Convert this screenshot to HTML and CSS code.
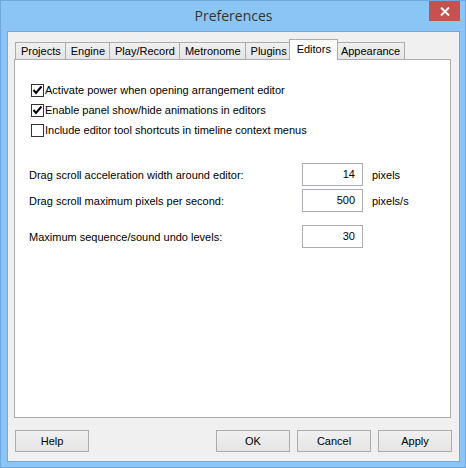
FILE: index.html
```html
<!DOCTYPE html>
<html lang="en">
<head>
  <meta charset="UTF-8" />
  <title>Preferences</title>
  <link rel="stylesheet" href="styles.css">
</head>
<body>

  <div class="window">
    <div class="titlebar">
      <span></span>
      <h1 class="title">Preferences</h1>
      <button class="close" aria-label="Close">
        <svg width="10" height="9" viewBox="0 0 10 9">
          <path d="M1 0.5 L9 8.5 M9 0.5 L1 8.5" stroke="#fff" stroke-width="1.9" />
        </svg>
      </button>
    </div>

    <div class="client">
      <ul class="tabs">
        <li class="tab">Projects</li>
        <li class="tab">Engine</li>
        <li class="tab">Play/Record</li>
        <li class="tab">Metronome</li>
        <li class="tab">Plugins</li>
        <li class="tab active">Editors</li>
        <li class="tab">Appearance</li>
      </ul>

      <div class="panel">
        <div class="checks">
          <label class="check">
            <span class="box"><svg width="11" height="11" viewBox="0 0 11 11"><path d="M1.5 5 L4 8 L9.5 1.5" fill="none" stroke="#000" stroke-width="2" /></svg></span>
            Activate power when opening arrangement editor
          </label>
          <label class="check">
            <span class="box"><svg width="11" height="11" viewBox="0 0 11 11"><path d="M1.5 5 L4 8 L9.5 1.5" fill="none" stroke="#000" stroke-width="2" /></svg></span>
            Enable panel show/hide animations in editors
          </label>
          <label class="check">
            <span class="box"></span>
            Include editor tool shortcuts in timeline context menus
          </label>
        </div>

        <div class="fields">
          <div class="row">
            <span class="label">Drag scroll acceleration width around editor:</span>
            <span class="field">14</span>
            <span class="unit">pixels</span>
          </div>
          <div class="row">
            <span class="label">Drag scroll maximum pixels per second:</span>
            <span class="field">500</span>
            <span class="unit">pixels/s</span>
          </div>
          <div class="row sep">
            <span class="label">Maximum sequence/sound undo levels:</span>
            <span class="field">30</span>
          </div>
        </div>
      </div>

      <div class="buttons">
        <button class="btn help">Help</button>
        <button class="btn">OK</button>
        <button class="btn">Cancel</button>
        <button class="btn">Apply</button>
      </div>
    </div>
  </div>

</body>
</html>
```

FILE: styles.css
```css
body {
  margin: 0;
  padding: 0;
  font-family: 'Liberation Sans', Arial, sans-serif;
  font-size: 11px;
  color: #000;
}

.window {
  width: 466px;
  height: 468px;
  box-sizing: border-box;
  border: 1px solid #6ea8dd;
  background: #8bc5f6;
  padding: 0 5px 5px 6px;
  display: flex;
  flex-direction: column;
}

.titlebar {
  height: 30px;
  display: grid;
  grid-template-columns: 1fr auto 1fr;
  align-items: start;
}

.title {
  margin: 0;
  font-family: 'Open Sans', 'Noto Sans', sans-serif;
  font-weight: normal;
  font-size: 14px;
  line-height: 30px;
  color: #333;
}

.close {
  justify-self: end;
  width: 31px;
  height: 20px;
  margin: 0;
  padding: 0;
  border: none;
  background: #c75050;
  display: flex;
  align-items: center;
  justify-content: center;
}

.client {
  flex: 1;
  background: #f0f0f0;
  border: 1px solid #76a9d8;
  padding: 7px 8px 9px 6px;
  display: flex;
  flex-direction: column;
}

.tabs {
  list-style: none;
  margin: 0;
  padding: 0 0 0 1px;
  height: 20px;
  display: flex;
  align-items: flex-end;
}

.tab {
  height: 17px;
  line-height: 17px;
  padding: 0 4px 0 5px;
  border: 1px solid #acacac;
  border-bottom: none;
  box-sizing: border-box;
  background: linear-gradient(#f0f0f0, #e5e5e5);
  white-space: nowrap;
}

.tab + .tab {
  margin-left: -1px;
}

.tab.active {
  height: 21px;
  line-height: 18px;
  margin: 0 -2px -1px -3px;
  padding: 0 6px 0 7px;
  background: #fff;
  position: relative;
  z-index: 1;
}

.panel {
  flex: 1;
  background: #fff;
  border: 1px solid #acacac;
  padding: 20px 14px 0 14px;
}

.checks {
  padding-left: 2px;
}

.check {
  height: 20px;
  display: flex;
  align-items: center;
}

.box {
  width: 13px;
  height: 13px;
  box-sizing: border-box;
  border: 1px solid #333;
  background: #fff;
  margin-right: 1px;
  display: flex;
}

.fields {
  margin-top: 23px;
}

.row {
  display: flex;
  align-items: center;
  margin-bottom: 3px;
}

.row.sep {
  margin-top: 13px;
}

.label {
  width: 273px;
}

.field {
  width: 61px;
  height: 23px;
  box-sizing: border-box;
  border: 1px solid #abadb3;
  line-height: 21px;
  text-align: right;
  padding-right: 7px;
}

.unit {
  margin-left: 9px;
}

.buttons {
  margin: 12px -1px 0 1px;
  display: flex;
  gap: 7px;
}

.btn {
  width: 74px;
  height: 22px;
  margin: 0;
  padding: 0;
  font-family: inherit;
  font-size: 11px;
  color: #000;
  border: 1px solid #acacac;
  background: linear-gradient(#f0f0f0, #e5e5e5);
}

.btn.help {
  margin-right: auto;
}
```
